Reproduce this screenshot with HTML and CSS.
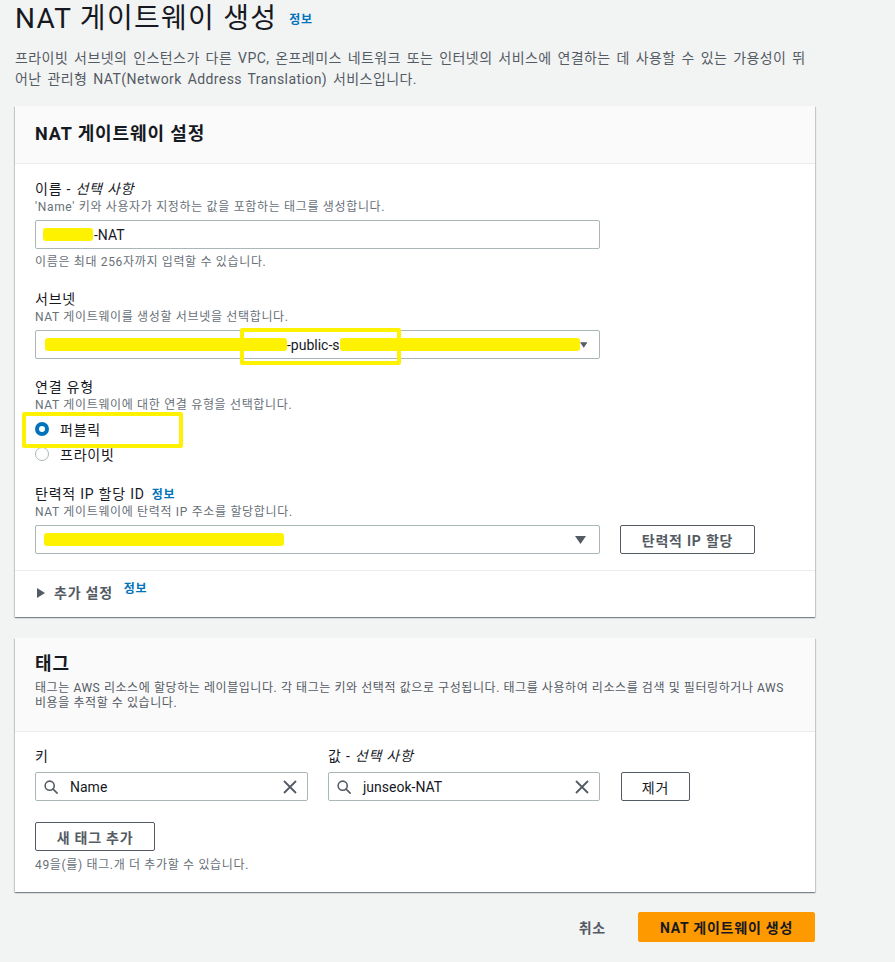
FILE: index.html
```html
<!DOCTYPE html>
<html lang="ko">
<head>
<meta charset="utf-8">
<title>NAT 게이트웨이 생성</title>
<link rel="stylesheet" href="styles.css">
</head>
<body>
<main class="page">
  <header class="page-head">
    <h1 class="page-title">NAT 게이트웨이 생성<a class="info-link title-info">정보</a></h1>
    <p class="page-desc">프라이빗 서브넷의 인스턴스가 다른 VPC, 온프레미스 네트워크 또는 인터넷의 서비스에 연결하는 데 사용할 수 있는 가용성이 뛰어난 관리형 NAT(Network Address Translation) 서비스입니다.</p>
  </header>

  <section class="card">
    <div class="card-head">
      <h2 class="card-title">NAT 게이트웨이 설정</h2>
    </div>
    <div class="card-body">
      <div class="field">
        <div class="label">이름 - <i>선택 사항</i></div>
        <div class="hint">'Name' 키와 사용자가 지정하는 값을 포함하는 태그를 생성합니다.</div>
        <div class="input"><span class="redact redact-name"></span><span class="val">-NAT</span></div>
        <div class="hint hint-after">이름은 최대 256자까지 입력할 수 있습니다.</div>
      </div>

      <div class="field">
        <div class="label">서브넷</div>
        <div class="hint">NAT 게이트웨이를 생성할 서브넷을 선택합니다.</div>
        <div class="select">
          <span class="sel-value"><span class="redact redact-sub1"></span><span class="val">-public-s</span><span class="redact redact-sub2"></span></span>
          <svg class="caret" width="11" height="8" viewBox="0 0 11 8"><path d="M0 0H11L5.5 8Z" fill="#545b64"/></svg>
        </div>
      </div>

      <div class="field">
        <div class="label">연결 유형</div>
        <div class="hint">NAT 게이트웨이에 대한 연결 유형을 선택합니다.</div>
        <div class="radios">
          <div class="radio">
            <svg width="14" height="14" viewBox="0 0 14 14"><circle cx="7" cy="7" r="5" fill="#fff" stroke="#0073bb" stroke-width="4"/></svg>
            <span>퍼블릭</span>
          </div>
          <div class="radio">
            <svg width="14" height="14" viewBox="0 0 14 14"><circle cx="7" cy="7" r="6.5" fill="#fff" stroke="#aab7b8" stroke-width="1"/></svg>
            <span>프라이빗</span>
          </div>
        </div>
      </div>

      <div class="field">
        <div class="label">탄력적 IP 할당 ID<a class="info-link label-info">정보</a></div>
        <div class="hint">NAT 게이트웨이에 탄력적 IP 주소를 할당합니다.</div>
        <div class="eip-row">
          <div class="select select-eip">
            <span class="sel-value"><span class="redact redact-eip"></span></span>
            <svg class="caret" width="11" height="8" viewBox="0 0 11 8"><path d="M0 0H11L5.5 8Z" fill="#545b64"/></svg>
          </div>
          <button class="btn btn-eip">탄력적 IP 할당</button>
        </div>
      </div>
    </div>
    <div class="expand">
      <svg class="expand-caret" width="8" height="10" viewBox="0 0 8 10"><path d="M0 0L8 5L0 10Z" fill="#545b64"/></svg>
      <span class="expand-text">추가 설정</span>
      <a class="info-link expand-info">정보</a>
    </div>
  </section>

  <section class="card card-tags">
    <div class="card-head tags-head">
      <h2 class="card-title">태그</h2>
      <p class="card-desc">태그는 AWS 리소스에 할당하는 레이블입니다. 각 태그는 키와 선택적 값으로 구성됩니다. 태그를 사용하여 리소스를 검색 및 필터링하거나 AWS 비용을 추적할 수 있습니다.</p>
    </div>
    <div class="card-body tags-body">
      <div class="tag-grid">
        <div class="label">키</div>
        <div class="label">값 - <i>선택 사항</i></div>
        <div></div>
        <div class="input search-input">
          <svg class="search-ico" width="14" height="14" viewBox="0 0 16 16"><circle cx="6.5" cy="6.5" r="5.2" fill="none" stroke="#545b64" stroke-width="1.8"/><path d="M10.4 10.4L15 15" stroke="#545b64" stroke-width="1.8" stroke-linecap="round"/></svg>
          <span class="val">Name</span>
          <svg class="clear-ico" width="14" height="14" viewBox="0 0 14 14"><path d="M1 1L13 13M13 1L1 13" stroke="#545b64" stroke-width="1.8"/></svg>
        </div>
        <div class="input search-input">
          <svg class="search-ico" width="14" height="14" viewBox="0 0 16 16"><circle cx="6.5" cy="6.5" r="5.2" fill="none" stroke="#545b64" stroke-width="1.8"/><path d="M10.4 10.4L15 15" stroke="#545b64" stroke-width="1.8" stroke-linecap="round"/></svg>
          <span class="val">junseok-NAT</span>
          <svg class="clear-ico" width="14" height="14" viewBox="0 0 14 14"><path d="M1 1L13 13M13 1L1 13" stroke="#545b64" stroke-width="1.8"/></svg>
        </div>
        <button class="btn btn-remove">제거</button>
      </div>
      <button class="btn btn-add">새 태그 추가</button>
      <div class="hint tags-count">49을(를) 태그.개 더 추가할 수 있습니다.</div>
    </div>
  </section>

  <div class="actions">
    <button class="btn-link">취소</button>
    <button class="btn btn-primary">NAT 게이트웨이 생성</button>
  </div>

  <div class="highlight hl-subnet"></div>
  <div class="highlight hl-radio"></div>
</main>
</body>
</html>
```

FILE: styles.css
```css
* { box-sizing: border-box; }

html, body {
  margin: 0;
  padding: 0;
  background: #f2f3f3;
}

body {
  font-family: Roboto, "Noto Sans CJK KR", sans-serif;
  color: #16191f;
  font-size: 14px;
}

.page {
  position: relative;
  width: 895px;
  padding: 0 80px 40px 15px;
}

.page-title {
  margin: 0;
  font-size: 28px;
  font-weight: 400;
  line-height: 38px;
  letter-spacing: 0.045em;
  color: #16191f;
}

.info-link {
  color: #0073bb;
  font-size: 12px;
  font-weight: 700;
  line-height: 1;
  letter-spacing: 0.055em;
  cursor: pointer;
}

.title-info {
  margin-left: 12px;
  position: relative;
  top: -4px;
}

.page-desc {
  margin: 10px 0 0;
  max-width: 795px;
  font-size: 14px;
  line-height: 21px;
  letter-spacing: 0.03em;
  word-spacing: 2px;
  color: #545b64;
}

.card {
  margin-top: 16px;
  background: #fff;
  box-shadow: 0 1px 1px 0 rgba(0, 28, 36, 0.3), 1px 1px 1px 0 rgba(0, 28, 36, 0.15), -1px 1px 1px 0 rgba(0, 28, 36, 0.15);
}

.card-head {
  background: #fafafa;
  border-bottom: 1px solid #eaeded;
  padding: 17px 20px 18px;
}

.card-title {
  margin: 0;
  font-size: 18px;
  font-weight: 700;
  line-height: 22px;
  letter-spacing: 0.05em;
}

.card-body {
  padding: 15px 20px 16px;
}

.field + .field {
  margin-top: 18px;
}

.label {
  font-size: 14px;
  line-height: 20px;
  letter-spacing: 0.055em;
  color: #16191f;
}

.label i {
  font-style: italic;
}

.hint {
  font-size: 12px;
  line-height: 17px;
  letter-spacing: 0.055em;
  color: #687078;
}

.hint-after {
  margin-top: 5px;
}

.input,
.select {
  margin-top: 4px;
  height: 29px;
  width: 565px;
  border: 1px solid #aab7b8;
  border-radius: 2px;
  background: #fff;
  display: flex;
  align-items: center;
  padding: 0 12px 0 7px;
  font-size: 14px;
}

.val {
  color: #16191f;
  white-space: nowrap;
  letter-spacing: 0;
}

.select {
  justify-content: space-between;
}

.sel-value {
  display: flex;
  align-items: center;
}

.redact {
  display: inline-block;
  height: 13px;
  background: #fff200;
  border-radius: 3px;
}

.redact-name { width: 50px; margin-right: 1px; }
.redact-sub1 { width: 242px; margin-left: 2px; }
.redact-sub2 { width: 240px; }
.redact-eip { width: 240px; margin-left: 1px; }

.radios {
  margin-top: 2px;
}

.radio {
  height: 25px;
  display: flex;
  align-items: center;
  gap: 11px;
  font-size: 14px;
  letter-spacing: 0.055em;
}

.label-info {
  margin-left: 7px;
}

.eip-row {
  display: flex;
  align-items: center;
  gap: 20px;
  margin-top: 4px;
}

.eip-row .select {
  margin-top: 0;
  padding-right: 13px;
}

.btn {
  font-family: inherit;
  height: 29px;
  border: 1px solid #545b64;
  border-radius: 2px;
  background: #fff;
  color: #545b64;
  font-size: 14px;
  font-weight: 700;
  letter-spacing: 0.055em;
  padding: 0 20px;
  cursor: pointer;
}

.btn-eip {
  width: 135px;
  padding: 0;
}

.expand {
  border-top: 1px solid #eaeded;
  padding: 12px 22px 14px;
  display: flex;
  align-items: center;
  height: 47px;
}

.expand-caret {
  flex: none;
}

.expand-text {
  margin-left: 9px;
  font-size: 14px;
  font-weight: 700;
  color: #545b64;
  line-height: 20px;
  letter-spacing: 0.055em;
}

.expand-info {
  margin-left: 11px;
  position: relative;
  top: -4px;
}

.card-tags {
  margin-top: 21px;
}

.tags-head {
  padding: 15px 20px 20px;
}

.card-desc {
  margin: 6px 0 0;
  font-size: 12px;
  line-height: 15px;
  letter-spacing: 0.048em;
  color: #545b64;
}

.tags-body {
  padding: 14px 20px 18px;
}

.tag-grid {
  display: grid;
  grid-template-columns: 273px 272px auto;
  column-gap: 20px;
  row-gap: 6px;
  align-items: center;
  justify-items: start;
}

.tag-grid .input {
  margin-top: 0;
  width: 100%;
  padding: 0 10px 0 8px;
}

.search-ico {
  flex: none;
  margin-right: 12px;
}

.search-input .val {
  flex: 1;
}

.clear-ico {
  flex: none;
}

.btn-remove {
  margin-left: 1px;
  width: 69px;
  padding: 0;
  font-weight: 400;
  color: #16191f;
}

.btn-add {
  margin-top: 21px;
  width: 120px;
  padding: 0;
}

.tags-count {
  margin-top: 6px;
}

.actions {
  width: 800px;
  margin-top: 20px;
  display: flex;
  justify-content: flex-end;
  align-items: center;
  gap: 12px;
}

.btn-link {
  font-family: inherit;
  background: transparent;
  border: none;
  font-size: 14px;
  font-weight: 700;
  letter-spacing: 0.055em;
  color: #545b64;
  padding: 0 20px;
  height: 30px;
  cursor: pointer;
}

.btn-primary {
  height: 30px;
  width: 177px;
  padding: 0;
  background: #ff9900;
  border-color: #ff9900;
  color: #16191f;
}

.highlight {
  position: absolute;
  border: 4px solid #fff200;
  border-radius: 2px;
  pointer-events: none;
}

.hl-subnet {
  left: 240px;
  top: 328px;
  width: 161px;
  height: 37px;
}

.hl-radio {
  left: 22px;
  top: 412px;
  width: 161px;
  height: 36px;
}
```
